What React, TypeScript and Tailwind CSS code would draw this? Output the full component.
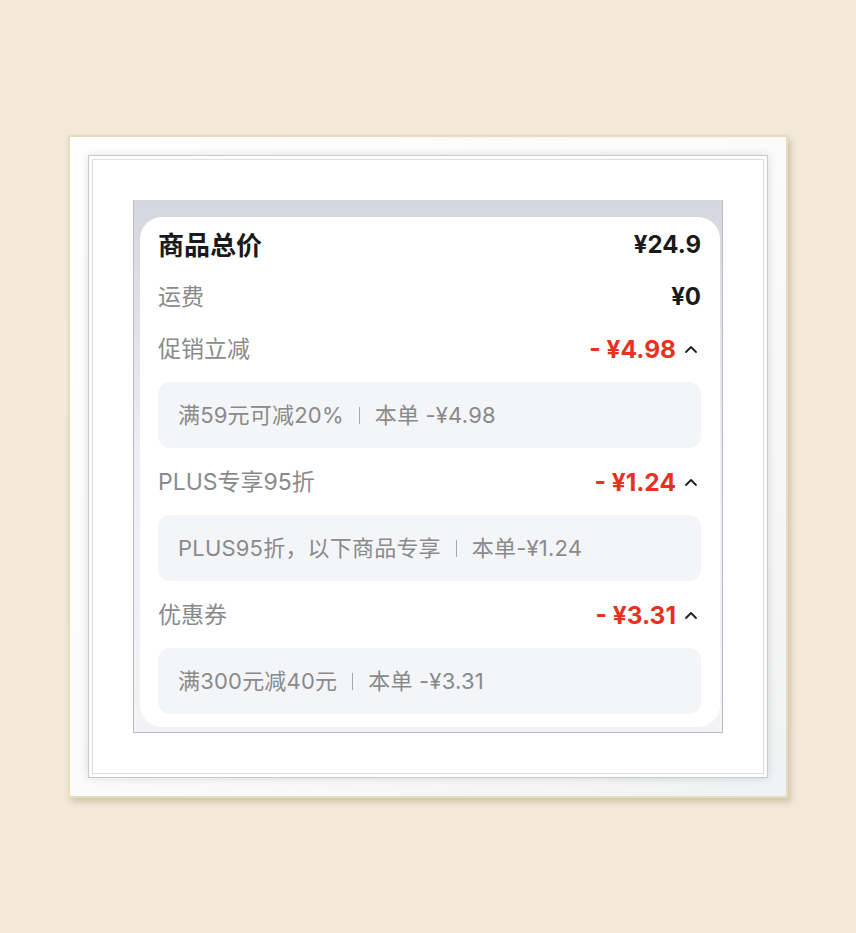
const CJK = '"Inter", "Noto Sans CJK SC", sans-serif';

type Discount = {
  label: string;
  amount: string;
  detail: string;
  note: string;
};

const discounts: Discount[] = [
  { label: '促销立减', amount: '- ¥4.98', detail: '满59元可减20%', note: '本单 -¥4.98' },
  { label: 'PLUS专享95折', amount: '- ¥1.24', detail: 'PLUS95折，以下商品专享', note: '本单-¥1.24' },
  { label: '优惠券', amount: '- ¥3.31', detail: '满300元减40元', note: '本单 -¥3.31' },
];

function ChevronUp() {
  return (
    <svg width="14" height="10" viewBox="0 0 14 10" className="ml-[8px] mr-[3px]">
      <polyline points="2,8 7,3 12,8" fill="none" stroke="#1f1f1f" strokeWidth="1.8" strokeLinecap="round" strokeLinejoin="round" />
    </svg>
  );
}

function DiscountBlock({ d }: { d: Discount }) {
  return (
    <>
      <div className="flex h-[52px] items-center justify-between">
        <span className="text-[23px] text-[#8a8a8a]">{d.label}</span>
        <span className="flex items-center">
          <span className="text-[24.5px] font-bold text-[#e8321f]">{d.amount}</span>
          <ChevronUp />
        </span>
      </div>
      <div className="mt-[7px] mb-[8px] flex h-[66px] items-center rounded-[12px] bg-[#f4f5f8] px-[20px] text-[22px] tracking-[0.2px] text-[#8a8a8a]">
        <span>{d.detail}</span>
        <span className="mx-[15px] h-[17px] w-px bg-[#a8a8a8]" />
        <span>{d.note}</span>
      </div>
    </>
  );
}

function PriceCard() {
  return (
    <div className="ml-[6px] w-[580px] rounded-[22px] bg-white pt-[2px] pl-[18px] pr-[19px] pb-[5px]" style={{ fontFamily: CJK }}>
      <div className="flex h-[52px] items-center justify-between text-[#1a1a1a]">
        <span className="text-[26px] font-bold">商品总价</span>
        <span className="text-[24px] font-bold">¥24.9</span>
      </div>
      <div className="flex h-[52px] items-center justify-between">
        <span className="text-[23px] text-[#8a8a8a]">运费</span>
        <span className="text-[24px] font-bold text-[#1a1a1a]">¥0</span>
      </div>
      {discounts.map((d) => (
        <DiscountBlock key={d.label} d={d} />
      ))}
    </div>
  );
}

export default function App() {
  return (
    <div className="h-[933px] w-[856px] bg-[#f3e9d9] pt-[135px] pl-[68px]">
      {/* frame */}
      <div className="h-[663px] w-[720px] border-2 border-[#e8dcbf] bg-gradient-to-br from-white via-[#fbfbfb] to-[#f1f2f3] p-[18px] shadow-[3px_4px_6px_rgba(150,130,90,0.35)]">
        {/* groove + mat */}
        <div className="h-full w-full border border-[#c6cacd] bg-white pt-[44px] pl-[44px] shadow-[0_0_9px_rgba(0,0,0,0.13),inset_0_0_0_3px_#fff,inset_0_0_0_4px_#dcdfe1]">
          <div className="h-[533px] w-[590px] border-x border-b border-[#bcbcc4] bg-gradient-to-b from-[#d6d6e0] via-[#eeeef3] to-[#f3f3f6] pt-[17px]">
            <PriceCard />
          </div>
        </div>
      </div>
    </div>
  );
}
